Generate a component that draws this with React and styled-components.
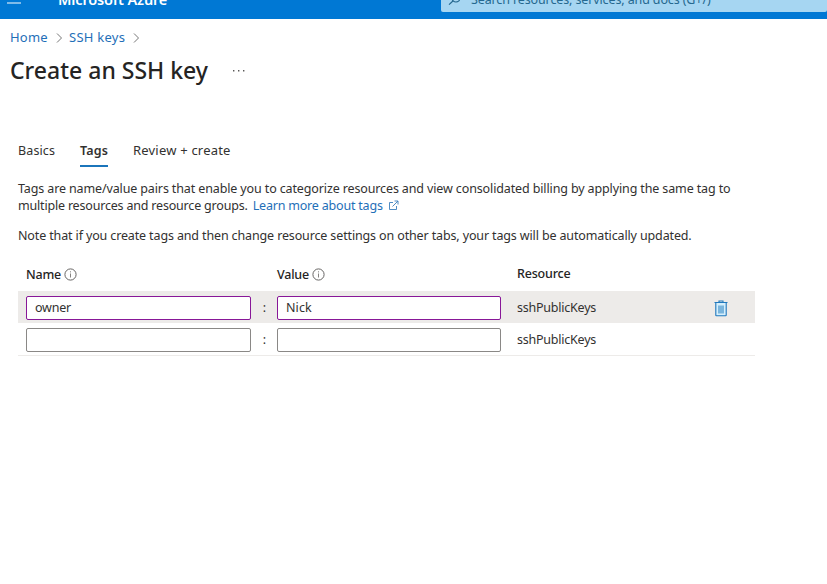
import React from "react";
import styled, { createGlobalStyle } from "styled-components";

const GlobalStyle = createGlobalStyle`
  * { box-sizing: border-box; }
  body {
    margin: 0;
    background: #fff;
    color: #323130;
    font: 400 12.5px/17px "Noto Sans", "Open Sans", sans-serif;
  }
`;

const Page = styled.div`
  width: 827px;
  height: 584px;
  overflow: hidden;
`;

const TopBar = styled.header`
  display: flex;
  align-items: flex-end;
  height: 19px;
  padding-left: 7px;
  overflow: hidden;
  background: #0078d4;
`;

const MenuBar = styled.span`
  width: 14px;
  height: 2px;
  margin-bottom: 15px;
  background: #7fbbe9;
`;

const Brand = styled.span`
  width: 383px;
  margin: 0 0 10px 37px;
  color: #fff;
  font-size: 14.5px;
  font-weight: 600;
  line-height: 20px;
  letter-spacing: -0.15px;
  white-space: nowrap;
`;

const SearchBox = styled.div`
  display: flex;
  flex: 1;
  align-items: flex-end;
  height: 30px;
  margin-bottom: 7px;
  padding: 0 0 4px 7px;
  border-radius: 2px;
  background: #a6d6f2;
  color: #25688f;
  letter-spacing: -0.12px;
  white-space: nowrap;

  svg { flex: none; margin: 0 11px 3px 0; }
`;

const Breadcrumb = styled.nav`
  display: flex;
  align-items: center;
  height: 20px;
  margin: 8px 0 0 10px;
  font-size: 13px;
  line-height: 20px;
`;

const Link = styled.a`
  color: #1f6fb8;
  letter-spacing: ${({ $track }) => $track || 0}px;
`;

const DocsLink = styled(Link)`
  margin-left: 2px;
`;

const Crumb = styled(Link)`
  width: ${({ $width }) => $width}px;
  white-space: nowrap;
`;

const TitleRow = styled.div`
  display: flex;
  align-items: center;
  height: 30px;
  margin: 8px 0 0 10px;
`;

const Title = styled.h1`
  width: 223px;
  margin: 0;
  color: #252423;
  font-size: 23px;
  font-weight: 500;
  line-height: 30px;
  letter-spacing: 0;
`;

const Tabs = styled.div`
  display: flex;
  gap: 25px;
  margin: 57px 0 0 18px;
`;

const Tab = styled.div`
  width: ${({ $width }) => $width}px;
  height: 25px;
  border-bottom: 2px solid ${({ $active }) => ($active ? "#1b75bb" : "transparent")};
  font-size: ${({ $size }) => $size || 12.5}px;
  font-weight: ${({ $active }) => ($active ? 600 : 400)};
  line-height: 17px;
  letter-spacing: ${({ $track }) => $track}px;
  white-space: nowrap;
`;

const Paragraph = styled.p`
  margin: ${({ $top }) => $top}px 0 0 18px;
  letter-spacing: ${({ $track }) => $track}px;
  white-space: nowrap;

  svg { margin-left: 5px; vertical-align: -1px; }
`;

const Line = styled.span`
  display: block;
  letter-spacing: ${({ $track }) => $track}px;
`;

const Table = styled.div`
  width: 737px;
  margin: 22px 0 0 18px;
`;

const TableRow = styled.div`
  display: grid;
  grid-template-columns: 225px 26px 224px 197px 1fr;
  align-items: start;
  height: 32px;
  padding: 5px 0 0 8px;
  background: ${({ $selected }) => ($selected ? "#edebe9" : "transparent")};
`;

const HeadRow = styled(TableRow)`
  height: 25px;
  padding-top: 0;
`;

const TableEnd = styled.div`
  height: 1px;
  background: #edebe9;
`;

const HeadCell = styled.div`
  display: flex;
  gap: 3px;
  padding-left: ${({ $indent }) => $indent || 0}px;
  color: #252423;
  font-weight: 550;
  line-height: ${({ $line }) => $line || 17}px;
  letter-spacing: -0.2px;

  svg { margin-top: 2px; }
`;

const Input = styled.input`
  width: 100%;
  height: 24px;
  margin: 0;
  padding: 0 8px 1px;
  border: 1px solid ${({ $edited }) => ($edited ? "#881798" : "#8a8886")};
  border-radius: 2px;
  outline: none;
  background: #fff;
  color: #323130;
  font: inherit;
  letter-spacing: ${({ $track }) => $track || 0}px;
`;

const Colon = styled.span`
  padding: 3px 0 0 1px;
  text-align: center;
`;

const Resource = styled.span`
  padding: 3px 0 0 16px;
  letter-spacing: -0.23px;
`;

const DeleteButton = styled.button`
  display: block;
  width: 14px;
  height: 17px;
  margin: 4px 0 0 16px;
  padding: 0;
  border: 0;
  background: none;

  svg { display: block; }
`;

const ChevronSvg = styled.svg`
  margin: 2px ${({ $gap }) => $gap}px 0 0;
`;

const Chevron = ({ gap }) => (
  <ChevronSvg $gap={gap} width="7" height="12" viewBox="0 0 7 12" fill="none">
    <path d="M1 1.5l4.5 4.5-4.5 4.5" stroke="#777" strokeWidth="1" />
  </ChevronSvg>
);

const InfoIcon = () => (
  <svg width="13" height="13" viewBox="0 0 13 13" fill="none">
    <circle cx="6.5" cy="6.5" r="5.6" stroke="#666463" />
    <path d="M6.5 5.5v4M6.5 3.3v1.1" stroke="#858381" />
  </svg>
);

const ExternalIcon = () => (
  <svg width="11" height="11" viewBox="0 0 11 11" fill="none" stroke="#3c80bd" strokeWidth="0.9">
    <path d="M5 2.5H1.5v7h7V6M6.5 1h3.5v3.5M10 1L4.5 6.5" />
  </svg>
);

const TrashIcon = () => (
  <svg width="14" height="17" viewBox="0 0 14 17" fill="none">
    <path d="M2 3h10v13H2z" fill="#d5effc" />
    <path d="M4 5.5h6v8H4z" fill="#7ab5dd" />
    <path d="M5 2.5V1h4v1.5M0.5 2.5h13M1.8 3v12.2q0 .6.6.6h9.2q.6 0 .6-.6V3" stroke="#1f78bd" strokeWidth="1.1" />
  </svg>
);

const rows = [
  { name: "owner", value: "Nick", edited: true },
  { name: "", value: "", edited: false },
];

export default function App() {
  return (
    <Page>
      <GlobalStyle />
      <TopBar>
        <MenuBar />
        <Brand>Microsoft Azure</Brand>
        <SearchBox>
          <svg width="12" height="12" viewBox="0 0 12 12" fill="none" stroke="#25688f" strokeWidth="1.2">
            <circle cx="8" cy="5" r="4" />
            <path d="M5.2 7.8L1 11.6" />
          </svg>
          Search resources, services, and docs (G+/)
        </SearchBox>
      </TopBar>
      <Breadcrumb>
        <Crumb $width={46} $track={0.2}>Home</Crumb>
        <Chevron gap={6} />
        <Crumb $width={64} $track={0.25}>SSH keys</Crumb>
        <Chevron gap={0} />
      </Breadcrumb>
      <TitleRow>
        <Title>Create an SSH key</Title>
        <svg width="12" height="3" viewBox="0 0 12 3" fill="#5a5958">
          <path d="M0 1h1.4v1.4H0zM5 1h1.4v1.4H5zM10 1h1.4v1.4H10z" />
        </svg>
      </TitleRow>
      <Tabs>
        <Tab $width={37} $track={0.12}>Basics</Tab>
        <Tab $width={28} $track={0.15} $active>Tags</Tab>
        <Tab $width={98} $track={0.2} $size={13}>Review + create</Tab>
      </Tabs>
      <Paragraph $top={13}>
        <Line $track={-0.127}>
          Tags are name/value pairs that enable you to categorize resources and view consolidated billing by applying the same tag to
        </Line>
        <Line $track={-0.19}>
          multiple resources and resource groups. <DocsLink $track={-0.2}>Learn more about tags<ExternalIcon /></DocsLink>
        </Line>
      </Paragraph>
      <Paragraph $top={13} $track={-0.135}>
        Note that if you create tags and then change resource settings on other tabs, your tags will be automatically updated.
      </Paragraph>
      <Table>
        <HeadRow>
          <HeadCell>Name<InfoIcon /></HeadCell>
          <span />
          <HeadCell>Value<InfoIcon /></HeadCell>
          <HeadCell $indent={16} $line={15}>Resource</HeadCell>
        </HeadRow>
        {rows.map((row, index) => (
          <TableRow key={index} $selected={row.edited}>
            <Input aria-label="Name" defaultValue={row.name} $edited={row.edited} $track={-0.2} />
            <Colon>:</Colon>
            <Input aria-label="Value" defaultValue={row.value} $edited={row.edited} $track={0.1} />
            <Resource>sshPublicKeys</Resource>
            {row.edited && (
              <DeleteButton aria-label="Delete tag"><TrashIcon /></DeleteButton>
            )}
          </TableRow>
        ))}
        <TableEnd />
      </Table>
    </Page>
  );
}
